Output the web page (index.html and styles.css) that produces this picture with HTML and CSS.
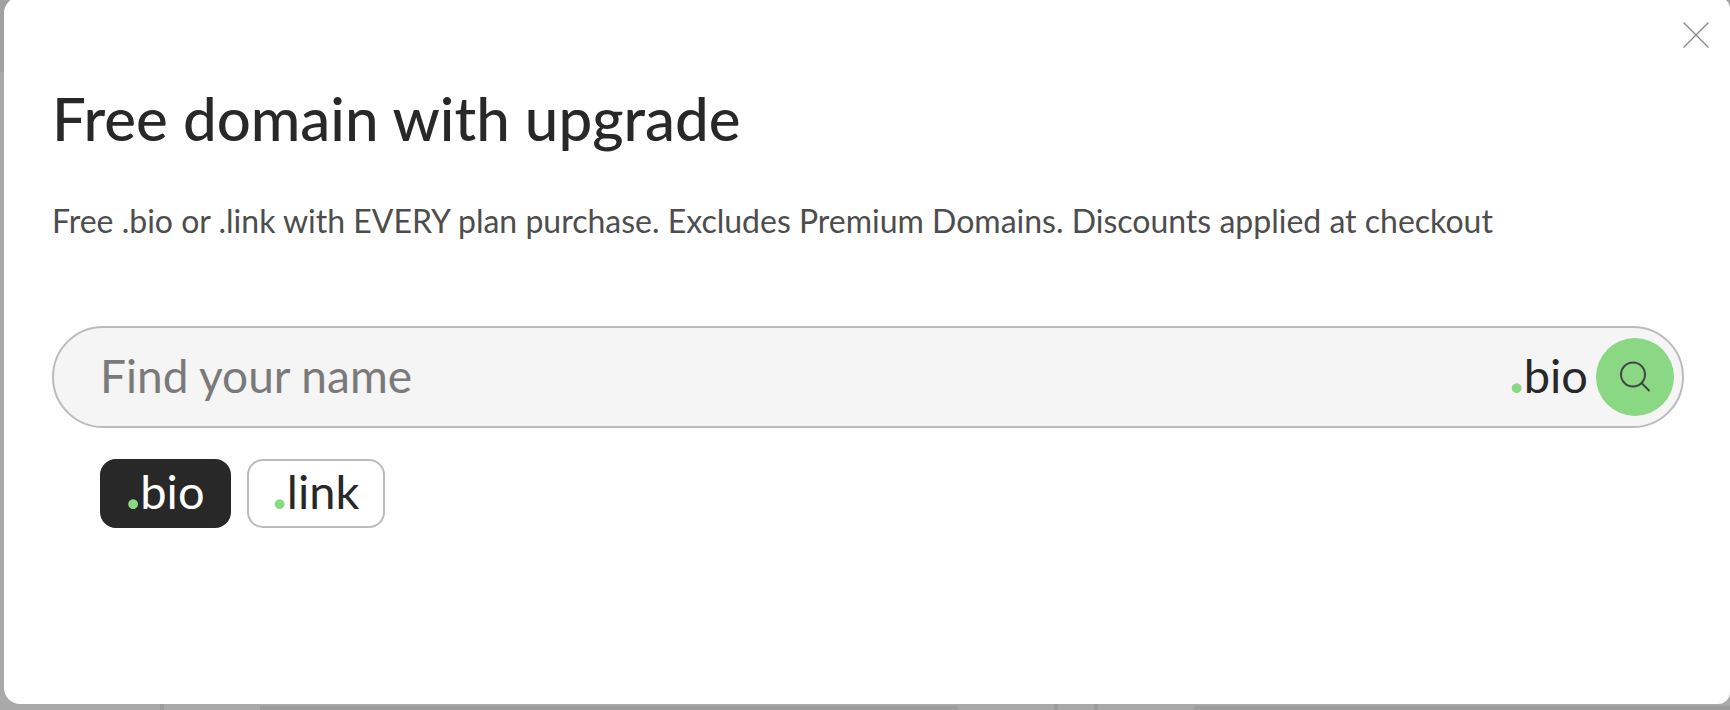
FILE: index.html
```html
<!DOCTYPE html>
<html lang="en">
<head>
    <meta charset="UTF-8">
    <meta name="viewport" content="width=device-width, initial-scale=1.0">
    <title>Free domain with upgrade</title>
    <link rel="stylesheet" href="styles.css">
</head>
<body>
    <main class="modal" role="dialog" aria-labelledby="modal-title">
        <header class="modal-top">
            <button type="button" class="close-btn" aria-label="Close">
                <svg width="26" height="26" viewBox="0 0 26 26" fill="none" stroke="#858585" stroke-width="1.2">
                    <path d="M0.5 0.5L25.5 25.5M25.5 0.5L0.5 25.5"/>
                </svg>
            </button>
        </header>

        <div class="modal-body">
            <h1 id="modal-title" class="title">Free domain with upgrade</h1>
            <p class="subtitle">Free .bio or .link with EVERY plan purchase. Excludes Premium Domains. Discounts applied at checkout</p>

            <form class="search">
                <input type="text" class="search-input" placeholder="Find your name" aria-label="Find your name">
                <span class="tld"><span class="dot">.</span>bio</span>
                <button type="submit" class="search-btn" aria-label="Search">
                    <svg width="32" height="32" viewBox="0 0 32 32" fill="none" stroke="#444444" stroke-width="2">
                        <circle cx="14" cy="13.5" r="12"/>
                        <path d="M22.5 22L30.5 30"/>
                    </svg>
                </button>
            </form>

            <div class="tld-list">
                <button type="button" class="tld tld-btn active"><span class="dot">.</span>bio</button>
                <button type="button" class="tld tld-btn"><span class="dot">.</span>link</button>
            </div>
        </div>
    </main>

    <!-- top edge of the cards behind the modal -->
    <div class="page-cards">
        <div class="card"><div class="card-image"></div></div>
        <div class="card card-last"><div class="card-image"></div></div>
    </div>
</body>
</html>
```
FILE: styles.css
```css
* {
    box-sizing: border-box;
}
body {
    margin: 0;
    min-height: 100vh;
    display: flex;
    flex-direction: column;
    overflow: hidden;
    font-family: Lato, "Liberation Sans", sans-serif;
    color: #282828;
    background: linear-gradient(#a1a1a1 72px, #a9a9a9 72px);
}
.modal {
    flex: 1;
    margin: -3px 0 0 4px;
    background: #fff;
    border-radius: 16px 12px 12px 16px;
}
.modal-top {
    display: flex;
    justify-content: flex-end;
    padding: 25px 21px 0;
}
.close-btn {
    display: flex;
    padding: 0;
    border: none;
    background: none;
    cursor: pointer;
}
.modal-body {
    padding: 32px 46px 32px 48px;
}
.title {
    margin: 0;
    font-size: 60px;
    font-weight: 500;
    line-height: 76px;
}
.subtitle {
    margin: 45px 0 0;
    font-size: 32px;
    line-height: 40px;
    color: #4d4d4d;
}
.search {
    display: flex;
    align-items: center;
    margin-top: 85px;
    padding: 10px 8px 10px 46px;
    background: #f5f5f5;
    border: 2px solid #bbb;
    border-radius: 51px;
}
.search-input {
    flex: 1;
    min-width: 0;
    padding: 0 0 4px;
    border: none;
    outline: none;
    background: none;
    font-family: inherit;
    font-size: 46px;
    color: #282828;
}
.search-input::placeholder {
    color: #7a7a7a;
    opacity: 1;
}
.tld {
    padding-bottom: 4px;
    font-family: inherit;
    font-size: 47px;
    line-height: 61px;
    color: #282828;
}
.dot {
    color: #8bd884;
    font-size: 60px;
    font-weight: 900;
    line-height: 0;
}
.search-btn {
    display: flex;
    align-items: center;
    justify-content: center;
    width: 78px;
    height: 78px;
    margin-left: 8px;
    padding: 0;
    border: none;
    border-radius: 50%;
    background: #8bd884;
    cursor: pointer;
}
.tld-list {
    display: flex;
    gap: 16px;
    margin-top: 31px;
    padding-left: 48px;
}
.tld-btn {
    padding: 0 24px 4px;
    border: 2px solid #bbb;
    border-radius: 16px;
    background: #fff;
    cursor: pointer;
}
.tld-btn.active {
    color: #fff;
    background: #282828;
    border-color: #282828;
}
.page-cards {
    display: flex;
    gap: 36px;
    height: 6px;
    margin-left: 160px;
}
.card {
    flex: 0 0 898px;
    padding: 2px 96px 0;
    border: solid #9d9d9d;
    border-width: 0 4px;
}
.card-last {
    flex: 1;
    padding-right: 0;
    border-right: none;
}
.card-image {
    height: 4px;
    background: #9b9b9b;
}
```
